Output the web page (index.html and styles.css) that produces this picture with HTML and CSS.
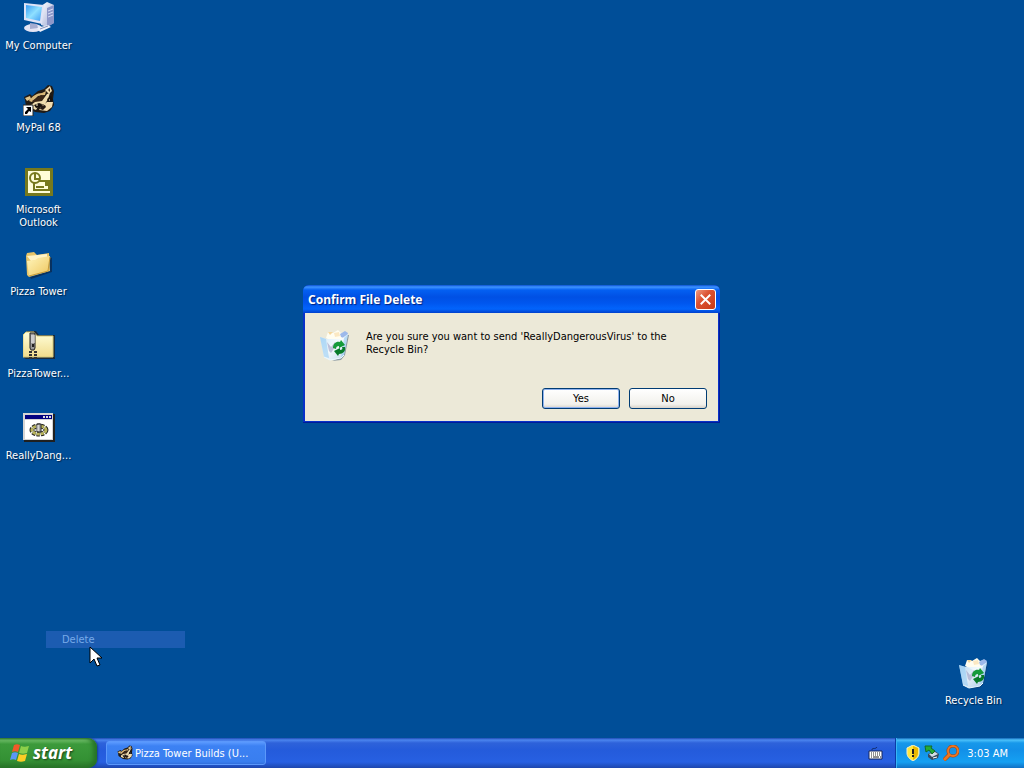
FILE: index.html
```html
<!DOCTYPE html>
<html lang="en">
<head>
<meta charset="utf-8">
<title>Desktop</title>
<link rel="stylesheet" href="styles.css">
</head>
<body>
<svg class="defs" aria-hidden="true">
  <defs>
    <linearGradient id="screen" x1="0" y1="0" x2="1" y2="1"><stop offset="0" stop-color="#3a9cf5"/><stop offset=".5" stop-color="#8fe0ff"/><stop offset="1" stop-color="#3f9df4"/></linearGradient>
    <linearGradient id="metal" x1="0" y1="0" x2="1" y2="1"><stop offset="0" stop-color="#fff"/><stop offset="1" stop-color="#9ba6d3"/></linearGradient>
    <linearGradient id="folder" x1="0" y1="0" x2="1" y2="1"><stop offset="0" stop-color="#fff6bd"/><stop offset="1" stop-color="#eec65e"/></linearGradient>
    <linearGradient id="paper" x1="0" y1="0" x2="0" y2="1"><stop offset="0" stop-color="#ffffdc"/><stop offset="1" stop-color="#f1dc8c"/></linearGradient>
    <linearGradient id="glass" x1="0" y1="0" x2="1" y2="1"><stop offset="0" stop-color="#c9e6fb"/><stop offset=".5" stop-color="#f6fbff"/><stop offset="1" stop-color="#b4d2ee"/></linearGradient>
    <symbol id="bin" viewBox="0 0 32 32">
      <path d="M28 6l2 0-4 20-4 5-9 1 10-4z" fill="#173a63" opacity=".45"/>
      <path d="M7 9l2-6 5 1 5-3 3 3 4-1-1 7-8 4z" fill="#fffdf0"/>
      <path d="M9 3l5 0-3 3z" fill="#f5d79c"/><path d="M15 4l5-1 1 4-5 1z" fill="#fbe8c2"/>
      <path d="M21 5l5-3 3 2-2 6-5-2z" fill="#9db9ea"/>
      <path d="M1 8l7 2h14l7-5-4 21-3 3-11 2-6-3z" fill="url(#glass)" opacity=".92"/>
      <path d="M1 8l6 2 3 19-5-1zM25 9l4-4-4 21-3 3z" fill="#8ec9f3" opacity=".55"/>
      <path d="M8 13l4 5 4-5v5l-4 6-2-2z" fill="#a5a4c7" opacity=".65"/>
      <path d="M14 19c0-4 3-7 7-6l1-2 4 5-6 3v-2c-2 0-3 1-3 3z" fill="#159a3a"/>
      <path d="M26 18c1 4-2 7-6 7l-1 2-4-5 6-3v2c2 0 3-1 2-3z" fill="#087b2a"/>
      <path d="M5 28l6 3 11-2 3-3" fill="none" stroke="#eaf8ff"/>
    </symbol>
    <symbol id="raccoon" viewBox="0 0 32 32">
      <path d="M1 13l6-3 2 2 6-5 6-2 4-4 4 1 2 5-1 8 1 6-4 6-6 2-9-1-9-6-1-6z" fill="#211a14"/>
      <path d="M22 6l5-4 2 5-3 3z" fill="#f0dcae"/><path d="M25 6l2-2v4z" fill="#4b2c16"/>
      <path d="M2 14l5-2 1 3-4 2z" fill="#e0c48a"/>
      <path d="M6 17c3-5 8-8 13-8l4-2-1 4-7 1-6 6z" fill="#d9b879"/>
      <path d="M9 17l9-6 4 1-3 5-7 3z" fill="#3b2717"/>
      <path d="M8 21l4-3 7-1 5-7 3-1-2 6-3 5-6 1-3 5-5-2z" fill="#efdcae"/>
      <path d="M11 21l5-2 3 1-2 3-4 1zM24 15l4-3 2 4-4 3z" fill="#19120e"/>
      <path d="M20 21l4-3 6 0-1 5-5 4-8-1 2-3z" fill="#f3ddb0"/>
      <path d="M18 22l4-1 1 2-3 3-3-1z" fill="#241914"/>
      <path d="M13 21h2M26 16h1" stroke="#fff2cc"/>
    </symbol>
  </defs>
</svg>

<main class="desktop">
  <nav class="shortcuts" aria-label="Desktop items">
    <a class="item" href="#computer">
      <svg class="icon" viewBox="0 0 32 32">
        <path d="M18 4l6-4 7 3v18l-7 4-6-2z" fill="url(#metal)"/>
        <path d="M24 6l7-3v18l-7 4z" fill="#8d97c9"/>
        <path d="M25 9l5-2M25 12l5-2M25 15l5-2" stroke="#d9def6"/>
        <ellipse cx="10" cy="26" rx="9" ry="4" fill="#e4e4f4"/><path d="M7 21l7 1 1 4-8 1z" fill="#a5acd0"/>
        <path d="M1 1l20 2-2 19L1 18z" fill="#dfe3f6"/>
        <path d="M3 3l16 2-2 14L3 16z" fill="url(#screen)"/>
        <path d="M14 26l11-3 3 2-11 5z" fill="#eef0fa"/><path d="M17 27l8-3" stroke="#8c94b9"/>
      </svg>
      <span>My Computer</span>
    </a>
    <a class="item" href="#mypal">
      <svg class="icon" viewBox="0 0 32 32">
        <use href="#raccoon" width="32" height="32"/>
        <path d="M0 21h10v11H0z" fill="#fff" stroke="#222"/>
        <path d="M3 23h5v5l-2-1-2 3H2v-2l3-3z" fill="#000"/>
      </svg>
      <span>MyPal 68</span>
    </a>
    <a class="item" href="#outlook">
      <svg class="icon" viewBox="0 0 32 32">
        <path d="M2 2h28v28H2z" fill="#77791d"/><path d="M5 5h22v22H5z" fill="#fffdd8"/>
        <path d="M11 15h15v9H11z" fill="#fffdd8" stroke="#77791d" stroke-width="2"/>
        <path d="M13 21h8" stroke="#77791d" stroke-width="2"/><path d="M22 16h3v4h-3z" fill="#77791d"/>
        <circle cx="12" cy="12" r="5" fill="#fffdd8" stroke="#77791d" stroke-width="2"/>
        <path d="M12 8v5h4" fill="none" stroke="#77791d" stroke-width="2"/>
      </svg>
      <span>Microsoft Outlook</span>
    </a>
    <a class="item" href="#pizza">
      <svg class="icon" viewBox="0 0 32 32">
        <path d="M7 29l20-6V9l2 1v14L8 31z" fill="#0b2547" opacity=".7"/>
        <path d="M3 8l1-3 7-1 3 3 12-2 1 18L6 29 4 27z" fill="#e6c469"/>
        <path d="M4 8l20-2v4L8 13z" fill="#fff4c7"/>
        <path d="M4 13l8-1 3-2 12-2-2 15L6 28z" fill="url(#folder)"/>
        <path d="M6 28l19-5 2-14" fill="none" stroke="#c69c3d"/>
      </svg>
      <span>Pizza Tower</span>
    </a>
    <a class="item" href="#zip">
      <svg class="icon" viewBox="0 0 32 32">
        <path d="M1 28V5l3-4h9l3 4h16v24H3z" fill="#1a2b3c"/>
        <path d="M0 27V5l3-3h8l3 4h16v21z" fill="url(#paper)" stroke="#d9cb78"/>
        <path d="M7 3h5v15l-1 2H8l-1-2z" fill="#999" stroke="#222"/>
        <path d="M9 5v8M11 5v8" stroke="#fff"/><path d="M9 14h2v3H9z" fill="#222"/>
        <path d="M6 22h3m2 0h3m-8 3h3m2 0h3m-8 3h3m2 0h3" stroke="#333" stroke-width="2"/>
      </svg>
      <span>PizzaTower...</span>
    </a>
    <a class="item" href="#virus">
      <svg class="icon" viewBox="0 0 32 32">
        <path d="M1 2h31v28H1z" fill="#202020"/><path d="M0 1h30v27H0z" fill="#d4d4d4"/>
        <path d="M2 3h27v4H2z" fill="#020080"/><path d="M2 8h27v19H2z" fill="#fff"/>
        <path d="M20 5h2m1 0h2m1 0h2" stroke="#ddd" stroke-width="2"/>
        <ellipse cx="16" cy="18" rx="7" ry="4" fill="none" stroke="#222" stroke-width="5" stroke-dasharray="3 1"/>
        <ellipse cx="16" cy="18" rx="7" ry="4" fill="none" stroke="#b8b45a" stroke-width="3" stroke-dasharray="3 1"/>
        <path d="M14 12h4v8h-4z" fill="#aaa" stroke="#222"/><path d="M15 13v6" stroke="#fff"/>
      </svg>
      <span>ReallyDang...</span>
    </a>
  </nav>

  <a class="item recycle" href="#recycle">
    <svg class="icon" viewBox="0 0 32 32"><use href="#bin"/></svg>
    <span>Recycle Bin</span>
  </a>

  <section class="dialog" role="dialog" aria-labelledby="dialog-title">
    <header class="titlebar">
      <h1 id="dialog-title">Confirm File Delete</h1>
      <button class="close" type="button" aria-label="Close">
        <svg viewBox="0 0 20 20"><path d="M5 5l10 10M15 5L5 15" stroke="#fff" stroke-width="2"/></svg>
      </button>
    </header>
    <div class="dialog-body">
      <div class="message">
        <svg class="icon" viewBox="0 0 32 32"><use href="#bin"/></svg>
        <p>Are you sure you want to send 'ReallyDangerousVirus' to the Recycle Bin?</p>
      </div>
      <div class="actions">
        <button class="push default" type="button">Yes</button>
        <button class="push" type="button">No</button>
      </div>
    </div>
  </section>

  <div class="menu-fade">Delete</div>
  <svg class="cursor" viewBox="0 0 13 21" aria-hidden="true"><path d="M1 1v16l4-4 3 7 3-1-3-7h5z" fill="#fff" stroke="#000"/></svg>
</main>

<footer class="taskbar">
  <button class="start" type="button">
    <svg viewBox="0 0 20 20" aria-hidden="true">
      <path d="M4 2c2-1 4-1 6 0L8 9c-2-1-4-1-6 0z" fill="#f15a29"/>
      <path d="M11 3c2 1 4 1 8 0l-2 7c-3 1-5 1-8 0z" fill="#8ccf4a"/>
      <path d="M2 10c2-1 4-1 6 0l-2 7c-2-1-4-1-6 0z" fill="#5b97f5"/>
      <path d="M9 11c2 1 4 1 8 0l-2 7c-3 1-5 1-8 0z" fill="#fccd25"/>
    </svg>
    <span>start</span>
  </button>
  <button class="task" type="button">
    <svg viewBox="0 0 32 32" aria-hidden="true"><use href="#raccoon"/></svg>
    <span>Pizza Tower Builds (U...</span>
  </button>
  <div class="language">
    <svg viewBox="0 0 16 16" role="img" aria-label="Keyboard">
      <path d="M5 4c0-3 3 0 5-3" fill="none" stroke="#112a66"/>
      <path d="M2 5h13v8H2z" fill="#fff" stroke="#17265c"/>
      <path d="M4 7h10M4 9h10" stroke="#222" stroke-dasharray="1 1"/><path d="M4 11h1m1 0h6m1 0h1" stroke="#222"/>
    </svg>
  </div>
  <div class="tray">
    <svg viewBox="0 0 16 16" role="img" aria-label="Security alert">
      <path d="M8 0l6 3v5c0 4-3 6-6 8-3-2-6-4-6-8V3z" fill="#ffe63c" stroke="#f2f0cb"/>
      <path d="M8 1l5 2v5c0 3-2 5-5 7z" fill="#e9b900"/><path d="M8 4v5m0 1v2" stroke="#222" stroke-width="2"/>
    </svg>
    <svg viewBox="0 0 16 16" role="img" aria-label="Safely remove hardware">
      <path d="M4 9l7-3 4 3-1 4-6 2-4-3z" fill="#384a5c"/><path d="M5 9l6-2 3 2-6 3z" fill="#d3dde6"/>
      <path d="M1 1l7 0-1 2 4 3-3 3-3-4-3 2z" fill="#26ac35" stroke="#126c27"/><path d="M9 13l4-1" stroke="#fff"/>
    </svg>
    <svg viewBox="0 0 16 16" role="img" aria-label="Search">
      <circle cx="10" cy="6" r="5" fill="none" stroke="#a5440e" stroke-width="3"/>
      <path d="M6 10l-5 5" stroke="#a5440e" stroke-width="4"/>
      <circle cx="10" cy="6" r="5" fill="none" stroke="#ee7622" stroke-width="2"/><path d="M7 9l-6 6" stroke="#ee7622" stroke-width="3"/>
    </svg>
    <time>3:03 AM</time>
  </div>
</footer>
</body>
</html>
```

FILE: styles.css
```css
* { box-sizing: border-box; }

body {
  display: flex;
  flex-direction: column;
  height: 100vh;
  margin: 0;
  overflow: hidden;
  background: #004e98;
  color: #fff;
  font: 11px/13px Tahoma, "DejaVu Sans Condensed", sans-serif;
}

button { font: inherit; }
svg { flex: none; }
.defs { position: absolute; width: 0; height: 0; }

.desktop {
  position: relative;
  flex: 1;
}

.shortcuts {
  display: grid;
  grid-auto-rows: 82px;
  justify-content: start;
  padding-top: 2px;
}

.item {
  display: flex;
  flex-direction: column;
  align-items: center;
  gap: 5px;
  width: 77px;
  color: #fff;
  text-align: center;
  text-decoration: none;
  text-shadow: 1px 1px 1px #00264d;
}

.icon {
  width: 32px;
  height: 32px;
}

.recycle {
  position: absolute;
  right: 12px;
  bottom: 31px;
}

.dialog {
  position: absolute;
  top: 285px;
  left: 303px;
  width: 417px;
  padding: 0 2px 2px;
  border-radius: 6px 6px 0 0;
  background: #0831c8;
  box-shadow: inset -1px -1px #001c98;
  color: #000;
}

.titlebar {
  display: flex;
  align-items: center;
  justify-content: space-between;
  height: 28px;
  margin: 0 -2px;
  padding: 1px 4px 0 5px;
  border-radius: 6px 6px 0 0;
  background: linear-gradient(#0a50d2, #3e94ff 2px, #0460f2 5px, #0050e4 12px, #0056ee 18px, #0264fc 24px, #0040cc 28px);
}

.titlebar h1 {
  margin: 0;
  color: #fff;
  font: bold 12px/16px "Trebuchet MS", "Noto Sans", sans-serif;
  text-shadow: 1px 1px 1px #00237c;
}

.close {
  width: 21px;
  height: 21px;
  padding: 0;
  border: 1px solid #fff;
  border-radius: 3px;
  background: linear-gradient(135deg, #ee9a81, #dc5232 40%, #c93a16);
}

.close svg { display: block; width: 19px; height: 19px; }

.dialog-body {
  display: flex;
  flex-direction: column;
  gap: 27px;
  padding: 16px 11px 12px 14px;
  background: #ece9d8;
}

.message {
  display: flex;
  gap: 15px;
}

.message p {
  max-width: 310px;
  margin: 1px 0 0;
}

.actions {
  display: flex;
  justify-content: flex-end;
  gap: 9px;
}

.push {
  width: 78px;
  height: 21px;
  padding: 0;
  border: 1px solid #003c74;
  border-radius: 3px;
  background: linear-gradient(#fff, #f2f1ec 80%, #d8d3ca);
  color: #000;
}

.default { box-shadow: inset 0 0 0 1px #8fb2ee; }

.menu-fade {
  position: absolute;
  top: 631px;
  left: 46px;
  width: 139px;
  padding: 2px 16px;
  background: #1c5cb1;
  color: #77aae8;
}

.cursor {
  position: absolute;
  top: 646px;
  left: 89px;
  width: 13px;
  height: 21px;
}

.taskbar {
  display: flex;
  height: 30px;
  background: linear-gradient(#1e4cb5, #4b85ef 2px, #2e62da 5px, #245bdb 12px, #2760e2 24px, #1d46ad 30px);
}

.start {
  display: flex;
  align-items: center;
  gap: 3px;
  width: 97px;
  padding: 0 0 1px 10px;
  border: 0;
  border-radius: 0 9px 9px 0;
  background: linear-gradient(#357c32, #6fbf69 2px, #3c9a3b 6px, #349134 22px, #287328);
  box-shadow: inset -4px 0 4px #267326, 1px 0 2px #173f91;
  color: #fff;
  font: italic bold 17px/20px "Franklin Gothic Medium", "Noto Sans", sans-serif;
  text-shadow: 1px 1px 2px #184018;
}

.start svg { width: 20px; height: 20px; }

.task {
  display: flex;
  align-items: center;
  gap: 2px;
  width: 160px;
  margin: 3px 0 3px 9px;
  padding: 0 10px;
  border: 1px solid #5b98fb;
  border-radius: 3px;
  background: linear-gradient(#5c9bff, #3c81f3 4px, #397eef 20px, #316edb);
  color: #fff;
}

.task svg { width: 16px; height: 16px; }
.task span { white-space: nowrap; }

.language {
  display: flex;
  align-items: center;
  margin-left: auto;
  padding: 2px 12px 0;
}

.language svg { width: 16px; height: 16px; }

.tray {
  display: flex;
  align-items: center;
  gap: 3px;
  padding: 0 16px 0 9px;
  border-left: 1px solid #0b3ca6;
  background: linear-gradient(#1266b8, #4cc1fa 2px, #1798ea 5px, #1290e8 12px, #15a0f2 24px, #1070c4 30px);
  box-shadow: inset 1px 0 #38b6f5;
}

.tray svg { width: 16px; height: 16px; }
.tray time { margin-left: 5px; }
```
